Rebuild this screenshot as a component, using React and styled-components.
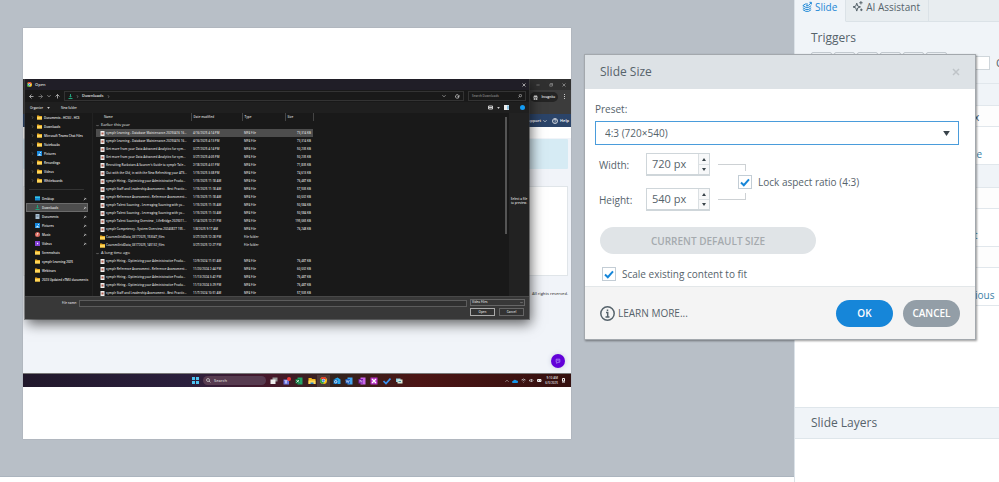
import React from "react";
import styled, { createGlobalStyle, css } from "styled-components";

const Global = createGlobalStyle`
  *, *::before, *::after { box-sizing: border-box; }
  body { margin: 0; background: #fff; font-family: "Open Sans", "Noto Sans", sans-serif; color: #56636b; }
  button, input, select { font: inherit; color: inherit; margin: 0; padding: 0; border: 0; background: none; }
  svg { display: block; flex: none; }
`;

const Page = styled.div`
  position: relative;
  display: flex;
  min-height: 100vh;
  overflow: hidden;
`;
const Workspace = styled.main`
  flex: 1;
  min-width: 0;
  margin-bottom: 5px;
  padding: 28px 223px 36px 23px;
  background: #b8bfc7;
  border-bottom: 1px solid #abb4be;
`;
const Slide = styled.section`
  padding: 51px 0 52px;
  background: #fff;
  box-shadow: 0 0 1px #8d959d;
`;

/* ---------- captured desktop on the slide ---------- */
const Desktop = styled.div`
  position: relative;
  display: flex;
  flex-direction: column;
  height: 308px;
  background: #f1f4f9;
  color: #ddd;
  font-size: 3px;
  font-weight: 600;
  line-height: 8px;
  overflow: hidden;
`;
const Line = styled.div`
  display: flex;
  align-items: center;
  flex: none;
  height: ${(p) => p.$h}px;
  gap: ${(p) => p.$gap || 0}px;
  padding: ${(p) => p.$pad || "0"};
  background: ${(p) => p.$bg || "transparent"};
  justify-content: ${(p) => p.$justify || "flex-start"};
`;
const Incognito = styled.span`
  display: flex;
  align-items: center;
  gap: 3px;
  height: 10px;
  padding: 0 3px;
  border-radius: 5px;
  background: #242424;
  color: #eee;
  font-size: 3px;
`;
const NavText = styled.a`
  display: flex;
  align-items: center;
  gap: 2px;
  color: #fff;
  font-size: 4px;
  font-weight: 600;
  text-decoration: none;
`;
const Banner = styled.div`
  height: 30px;
  margin: 11px 3px 17px 0;
  border-radius: 1px;
  background: #d6ebf4;
`;
const SiteTop = styled.div`
  padding-top: 1px;
  margin-top: -1px;
  background: linear-gradient(#fff 11px, #f1f4f9 11px);
`;
const SiteCard = styled.div`
  height: 90px;
  margin-right: 3px;
  background: #fff;
  border: 1px solid #e0e5e9;
`;
const Rights = styled.div`
  flex: 1;
  padding: 14px 3px 0;
  text-align: right;
  font-size: 4px;
  color: #555;
`;
const ChatBubble = styled.button`
  position: absolute;
  right: 6px;
  bottom: 19px;
  display: grid;
  place-items: center;
  width: 14px;
  height: 14px;
  border-radius: 50%;
  background: #6200d9;
  box-shadow: 0 0 5px #c9cdde;
`;
const Taskbar = styled.div`
  position: relative;
  display: flex;
  align-items: center;
  height: 14px;
  padding: 0 5px 0 169px;
  border-top: 1px solid #777;
  background: linear-gradient(90deg, #21182b, #2b1f3d 30%, #46182a 45%, #33231d 57%, #4c1515 72%, #34100f);
`;
const TaskSearch = styled.div`
  display: flex;
  align-items: center;
  gap: 3px;
  width: 63px;
  height: 9px;
  margin: 0 1px 0 4px;
  padding-left: 3px;
  border-radius: 5px;
  background: #573b50;
  color: #ccc;
  font-size: 4px;
`;
const TaskIcon = styled.span`
  display: grid;
  place-items: center;
  width: 13px;
  height: 12px;
  margin-right: ${(p) => (p.$tight ? -1 : 0)}px;
  background: ${(p) => (p.$active ? "#ffffff1c" : "none")};
`;
const Tray = styled.div`
  display: flex;
  align-items: center;
  gap: 3px;
  margin-left: auto;
  line-height: 5px;
  text-align: right;
`;

/* ---------- open-file dialog ---------- */
const FileDialog = styled.section`
  position: absolute;
  inset: 0 42px 68px 2px;
  display: flex;
  flex-direction: column;
  background: #191919;
  box-shadow: 2px 5px 12px #0009, 0 0 0 1px #55555588;
`;
const Field = styled.div`
  display: flex;
  align-items: center;
  gap: 3px;
  height: 10px;
  padding: 0 3px;
  border: 1px solid #333;
  flex: ${(p) => p.$flex || "none"};
  width: ${(p) => (p.$w ? p.$w + "px" : "auto")};
  color: ${(p) => (p.$dim ? "#888" : "#e2e2e2")};
  font-size: ${(p) => (p.$dim ? 3 : 4)}px;
`;
const FieldGap = styled.span`
  width: 3px;
`;
const Spacer = styled.span`
  flex: 1;
`;
const Bright = styled.span`
  color: #ddd;
  font-size: ${(p) => p.$size || 3}px;
`;
const Panes = styled.div`
  display: flex;
  flex: 1;
  min-height: 0;
`;
const Tree = styled.nav`
  width: 68px;
  padding-right: 4px;
  border-right: 1px solid #222;
`;
const TreeRow = styled.div`
  display: flex;
  align-items: center;
  gap: 2px;
  height: 9px;
  margin-left: 1px;
  padding: 0 1px 0 ${(p) => (p.$low ? 9 : 5)}px;
  white-space: nowrap;
  color: #e2e2e2;
  ${(p) => p.$active && css`background: #4d4d4d; outline: 1px solid #6b6b6b; outline-offset: -1px;`}
`;
const TreeArrow = styled.span`
  width: 4px;
`;
const TreeRule = styled.hr`
  height: 1px;
  margin: 4px;
  border: 0;
  background: #333;
`;
const Scroll = styled.div`
  width: 2px;
  height: ${(p) => p.$h}px;
  margin: ${(p) => p.$m};
  background: #555;
`;
const Files = styled.div`
  flex: 1;
  min-width: 0;
  padding-left: 3px;
`;
const FileTable = styled.table`
  width: 217px;
  table-layout: fixed;
  border-collapse: collapse;
  text-align: left;
  color: #dadada;
`;
const Th = styled.th`
  width: ${(p) => p.$w}px;
  height: 8px;
  padding: 0 0 0 ${(p) => p.$pl || 2}px;
  border-right: 1px solid #444;
  font-weight: 600;
`;
const Td = styled.td`
  height: 8px;
  padding: 0 2px;
  white-space: nowrap;
  text-align: ${(p) => (p.$right ? "right" : "left")};
`;
const Tr = styled.tr`
  ${(p) => p.$active && css`background: #4d4d4d;`}
`;
const GroupCell = styled.th`
  height: 8px;
  padding: 0;
  font-size: 4px;
  font-weight: 400;
  color: #eee;
`;
const NameCell = styled.span`
  display: flex;
  align-items: center;
  gap: ${(p) => (p.$group ? 2 : 1)}px;
  padding-left: ${(p) => (p.$group ? 0 : 2)}px;
`;
const Preview = styled.aside`
  width: 20px;
  padding: 84px 0 0;
  background: #222;
  text-align: center;
  line-height: 4px;
`;
const DialogFoot = styled.div`
  display: grid;
  grid-template-columns: 1fr 55px;
  gap: 1px 3px;
  height: 23px;
  padding: 2px 4px 3px 37px;
  background: #383838;
  border-top: 1px solid #484848;
`;
const FileName = styled.label`
  display: flex;
  align-items: center;
  gap: 2px;
`;
const NameInput = styled.input`
  flex: 1;
  height: 7px;
  border: 1px solid #5c5c5c;
  background: #303030;
`;
const TypeSelect = styled.button`
  display: flex;
  align-items: center;
  justify-content: space-between;
  height: 7px;
  padding: 0 1px;
  border: 1px solid #666;
  font-size: 3px;
  line-height: 5px;
`;
const FootButtons = styled.div`
  display: flex;
  grid-column: 2;
  gap: 4px;
`;
const FootButton = styled.button`
  width: 25px;
  height: 8px;
  border: 1px solid ${(p) => (p.$primary ? "#aaa" : "#666")};
  background: #333;
  font-size: 3px;
  line-height: 5px;
`;

/* ---------- right-hand panel ---------- */
const Panel = styled.aside`
  display: flex;
  flex-direction: column;
  width: 205px;
  overflow: hidden;
  border-left: 1px solid #dbe2e8;
  background: #fff;
`;
const Tabs = styled.div`
  display: flex;
  height: 22px;
  background: #e8edf0;
`;
const Tab = styled.button`
  display: flex;
  align-items: flex-start;
  gap: 3px;
  padding: 0 8px 0 7px;
  font-size: ${(p) => (p.$active ? 10 : 10)}px;
  line-height: 15px;
  border-right: 1px solid #dbe2e7;
  border-bottom: 1px solid ${(p) => (p.$active ? "#f0f4f8" : "#dbe2e7")};
  background: ${(p) => (p.$active ? "#f0f4f8" : "#e8edf0")};
  color: ${(p) => (p.$active ? "#1c87d6" : "#56636b")};
  svg { margin-top: 1px; }
`;
const TabFill = styled.div`
  flex: 1;
  border-bottom: 1px solid #dbe2e7;
`;
const TriggerHead = styled.div`
  height: 61px;
  padding: 7px 0 0 16px;
  background: #f0f4f8;
`;
const Heading = styled.h2`
  margin: 0;
  font-size: 12px;
  font-weight: 400;
  line-height: 18px;
`;
const ToolRow = styled.div`
  display: flex;
  align-items: flex-start;
  gap: 2px;
  padding-top: 5px;
  font-size: 11px;
  line-height: 22px;
  > * { flex: none; }
`;
const ToolButton = styled.button`
  width: 21px;
  height: 18px;
  border: 1px solid #c2c9cf;
  border-radius: 2px;
`;
const SmallBox = styled.span`
  width: 22px;
  height: 14px;
  margin: 4px 4px 0 19px;
  border: 1px solid #cfd6db;
  background: #fff;
`;
const ListRow = styled.div`
  height: ${(p) => p.$h}px;
  padding: ${(p) => p.$pad || "0"};
  border-top: 1px solid #e1e7ec;
  background: ${(p) => p.$bg || "#fff"};
  color: ${(p) => p.$color || "#3d82a8"};
  font-size: 10px;
  line-height: 14px;
`;
const Layers = styled.div`
  height: 32px;
  margin-top: auto;
  margin-bottom: 43px;
  padding: 6px 16px;
  border: solid #dfe6eb;
  border-width: 1px 0;
  background: #f0f4f8;
`;

/* ---------- slide size dialog ---------- */
const Dialog = styled.form`
  position: absolute;
  top: 54px;
  right: 23px;
  display: flex;
  flex-direction: column;
  width: 392px;
  border: 1px solid #a3a8ad;
  background: #fff;
  box-shadow: 1px 1px 2px #0006;
  font-size: 10px;
  line-height: 16px;
`;
const DialogHead = styled.header`
  display: flex;
  align-items: center;
  justify-content: space-between;
  height: 34px;
  padding: 0 15px;
  background: #dde2e6;
`;
const CloseButton = styled.button`
  width: 8px;
  height: 8px;
  color: #bfc4c8;
`;
const DialogBody = styled.div`
  display: flex;
  flex-direction: column;
  padding: 12px 16px 4px 10px;
`;
const Stack = styled.div`
  display: grid;
  align-items: center;
  > * { grid-area: 1 / 1; }
  > svg { pointer-events: none; justify-self: ${(p) => (p.$end ? "end" : "center")}; margin-right: ${(p) => p.$end || 0}px; }
`;
const Preset = styled.select`
  appearance: none;
  width: 100%;
  height: 24px;
  padding: 0 9px;
  border: 1px solid #4a9cdb;
  background: #fff;
`;
const PresetLabel = styled.label`
  height: 20px;
`;
const Dimensions = styled.div`
  display: flex;
  align-items: center;
  margin: 8px 0 16px 4px;
`;
const DimensionGrid = styled.div`
  display: grid;
  grid-template-columns: 37px 64px;
  gap: 12px 10px;
  align-items: center;
`;
const DimLabel = styled.label`
  color: #56636b;
`;
const Spin = styled.div`
  display: grid;
  grid-template: 1fr 1fr / 1fr 11px;
  height: 23px;
  border: 1px solid #cfd6da;
  border-bottom: 2px solid #cfd6da;
`;
const SpinInput = styled.input`
  grid-row: 1 / 3;
  width: 100%;
  min-width: 0;
  padding-left: 5px;
  font-size: 11px;
`;
const SpinButton = styled.button`
  display: grid;
  place-items: center;
  border-left: 1px solid #dbe0e3;
  background: #f7f8f9;
  & + & { border-top: 1px solid #dbe0e3; }
`;
const Bracket = styled.div`
  display: grid;
  grid-template-rows: 7px 14px 7px;
  gap: 4px;
  margin-left: 8px;
  width: 28px;
`;
const Arm = styled.span`
  border-right: 1px solid #cdd1d4;
  ${(p) => (p.$top ? css`border-top: 1px solid #cdd1d4;` : css`border-bottom: 1px solid #cdd1d4;`)}
`;
const CheckLabel = styled.label`
  display: flex;
  align-items: center;
  gap: 6px;
  margin-left: ${(p) => p.$shift || 0}px;
`;
const Check = styled.input`
  appearance: none;
  width: 14px;
  height: 14px;
  border: 1px solid #c3cdd5;
  background: #fff;
`;
const DefaultSize = styled.button`
  width: 216px;
  height: 27px;
  margin: 0 0 12px 5px;
  border-radius: 14px;
  background: #e0e4e7;
  color: #a5aaae;
  font-size: 10px;
  font-weight: 600;
`;
const DialogFooter = styled.footer`
  display: flex;
  align-items: center;
  gap: 10px;
  height: 53px;
  padding: 0 15px;
  border-top: 1px solid #e3e7e9;
  background: #f4f4f4;
`;
const Learn = styled.a`
  display: flex;
  align-items: center;
  gap: 3px;
  margin-right: auto;
  color: #56636b;
  text-decoration: none;
`;
const Pill = styled.button`
  width: 57px;
  height: 27px;
  border-radius: 14px;
  background: ${(p) => (p.$primary ? "#1686d9" : "#939ea7")};
  color: #fff;
  font-size: 10px;
  font-weight: 600;
`;

/* ---------- icons ---------- */
const Triangle = ({ up, w = 7, h = 5, fill = "#39434a" }) => (
  <svg width={w} height={h} viewBox="0 0 8 6" fill={fill}>
    <path d={up ? "M0 6 4 0 8 6Z" : "M0 0h8L4 6Z"} />
  </svg>
);
const Tick = () => (
  <svg width="10" height="9" viewBox="0 0 10 9" fill="none" stroke="#1686d9" strokeWidth="2">
    <path d="M1 4.5 3.8 7.2 9 1.4" />
  </svg>
);
const Cross = ({ s = 8, c = "currentColor", w = 1.5 }) => (
  <svg width={s} height={s} viewBox="0 0 8 8" stroke={c} strokeWidth={w}>
    <path d="M1 1l6 6M7 1 1 7" />
  </svg>
);
const Glyph = ({ d, s = 5, c = "#ccc", w = 1.5 }) => (
  <svg width={s} height={s} viewBox="0 0 10 10" fill="none" stroke={c} strokeWidth={w}>
    <path d={d} />
  </svg>
);
const G = {
  left: "M9 5H1M5 1 1 5l4 4",
  right: "M1 5h8M5 1l4 4-4 4",
  up: "M5 9V1M1 5l4-4 4 4",
  down: "M1 3l4 4 4-4",
  chevron: "M3 1l4 4-4 4",
  caretUp: "M1 7l4-4 4 4",
  reload: "M8 2v3H5M8 5A3.5 3.5 0 1 1 7 2.5",
  search: "M6 1a3 3 0 1 1 0 6a3 3 0 1 1 0-6M4 6 1 9",
  searchLeft: "M4 1a3 3 0 1 1 0 6a3 3 0 1 1 0-6M6 6l3 3",
  minus: "M1 5h8",
  box: "M2 3h6v5H2ZM4 3V1h5v5H8",
};
const kinds = {
  folder: (<><path d="M0 1h4l1 1h5v7H0Z" fill="#e7a922" /><path d="M0 4h10v5H0Z" fill="#ffd65a" /></>),
  desktop: (<><path d="M0 1h10v8H0Z" fill="#168bd1" /><path d="M0 1h10v3H0Z" fill="#35c3e8" /></>),
  down: (<path d="M4 0h2v4h2L5 7 2 4h2ZM1 8h8v2H1Z" fill="#21a37b" />),
  doc: (<><path d="M1 0h8v10H1Z" fill="#a9bfd1" /><path d="M3 3h4v1H3ZM3 5h4v1H3Z" fill="#54708a" /></>),
  picture: (<><path d="M0 0h10v10H0Z" fill="#1689df" /><path d="m1 9 4-4 4 4Z" fill="#c9ecff" /><circle cx="7" cy="3" r="1" fill="#fff" /></>),
  music: (<><circle cx="5" cy="5" r="5" fill="#d9675c" /><path d="M4 2h3v1H5v4H3V5h1Z" fill="#fff" /></>),
  video: (<><path d="M0 0h10v10H0Z" fill="#8542d8" /><path d="m4 3 3 2-3 2Z" fill="#fff" /></>),
  mp4: (<><path d="M1 0h8v10H1Z" fill="#eee" /><path d="M3 3h4v4H3Z" fill="#b55b48" /></>),
};
const FileIcon = ({ kind, s = 5 }) => (
  <svg width={s} height={s} viewBox="0 0 10 10">{kinds[kind]}</svg>
);
const ChromeIcon = ({ s }) => (
  <svg width={s} height={s} viewBox="0 0 16 16">
    <circle cx="8" cy="8" r="8" fill="#fbc116" />
    <path d="M8 8 1 4a8 8 0 0 1 14 0Z" fill="#e33b2e" />
    <path d="M8 8 1 4a8 8 0 0 0 6 12l4-7Z" fill="#28a34a" />
    <circle cx="8" cy="8" r="3.8" fill="#fff" />
    <circle cx="8" cy="8" r="2.8" fill="#3d80ed" />
  </svg>
);
const taskArt = [
  <><path d="M5 1h10v8H5Z" fill="#999" /><path d="M1 5h10v9H1Z" fill="#eee" /></>,
  <><path d="M1 5h11v10H1Z" fill="#6a70dc" /><path d="M3 7h6v1H7v5H5V8H3Z" fill="#fff" /><circle cx="12" cy="4" r="4" fill="#e93b3b" /></>,
  <><path d="M5 1h10v14H5Z" fill="#21a366" /><path d="M1 4h9v9H1Z" fill="#107c41" /><path d="m3 6 5 5M8 6l-5 5" stroke="#fff" strokeWidth="1.5" /></>,
  <><path d="M1 2h6l1 2h7v10H1Z" fill="#f2b51c" /><path d="M1 7h14v7H1Z" fill="#ffd95d" /><path d="M5 11h6v3H5Z" fill="#2787d1" /></>,
  null,
  <><path d="M3 4 9 1l6 4v9H3Z" fill="#28a8ea" /><path d="M1 5h9v9H1Z" fill="#0f6cbd" /><circle cx="5.5" cy="9.5" r="2.5" fill="none" stroke="#fff" strokeWidth="1.5" /></>,
  <><path d="M5 1h10v14H5Z" fill="#41a5ee" /><path d="M1 4h9v9H1Z" fill="#185abd" /><path d="m2 6 2 5 1.5-4L7 11l2-5" fill="none" stroke="#fff" /></>,
  <><path d="M5 1h10v14H5Z" fill="#ca64ea" /><path d="M1 4h9v9H1Z" fill="#7719aa" /><path d="M4 11V6l4 5V6" fill="none" stroke="#fff" /></>,
  <><path d="M1 1h14v14H1Z" fill="#b832c5" /><path d="m4 4 8 8M12 4l-8 8" stroke="#fff" strokeWidth="2.5" /></>,
  <path d="m1 8 5 5 9-10" fill="none" stroke="#3b92ef" strokeWidth="3.5" />,
  <><path d="M2 3h9v7H2Z" fill="#8bc7df" /><path d="M5 5h10v8H5Z" fill="#d7e8d8" /><path d="M7 8h5v2H7Z" fill="#478ba5" /></>,
];

/* ---------- data ---------- */
const upperTree = [
  ["Documents - HCSU - HCS", "folder"], ["Downloads", "folder"], ["Microsoft Teams Chat Files", "folder"],
  ["Notebooks", "folder"], ["Pictures", "picture"], ["Recordings", "folder"], ["Videos", "folder"], ["Whiteboards", "folder"],
];
const lowerTree = [
  ["Desktop", "desktop", 1], ["Downloads", "down", 1], ["Documents", "doc", 1], ["Pictures", "picture", 1],
  ["Music", "music", 1], ["Videos", "video", 1], ["Screenshots", "folder"], ["symplr Learning 2025", "folder"],
  ["Webinars", "folder"], ["2023 Updated cTMU documents", "folder"],
];
const recent = [
  ["symplr Learning - Database Maintenance-20250416 16...", "4/16/2025 4:14 PM", "MP4 File", "73,314 KB"],
  ["symplr Learning - Database Maintenance-20250416 16...", "4/16/2025 4:13 PM", "MP4 File", "73,314 KB"],
  ["Get more from your Data Advanced Analytics for sym...", "3/27/2025 4:14 PM", "MP4 File", "50,235 KB"],
  ["Get more from your Data Advanced Analytics for sym...", "3/27/2025 4:05 PM", "MP4 File", "50,235 KB"],
  ["Recruiting Rockstars A Sourcer's Guide to symplr Tale...", "2/18/2025 4:31 PM", "MP4 File", "71,835 KB"],
  ["Out with the Old, in with the New Refreshing your ATS...", "1/15/2025 3:38 PM", "MP4 File", "74,613 KB"],
  ["symplr Hiring - Optimizing your Administrative Produ...", "1/15/2025 11:18 AM", "MP4 File", "76,487 KB"],
  ["symplr Staff and Leadership Assessment - Best Practic...", "1/15/2025 11:18 AM", "MP4 File", "57,505 KB"],
  ["symplr Reference Assessment - Reference Assessment...", "1/15/2025 11:18 AM", "MP4 File", "60,032 KB"],
  ["symplr Talent Sourcing - Leveraging Sourcing with yo...", "1/15/2025 11:15 AM", "MP4 File", "50,584 KB"],
  ["symplr Talent Sourcing - Leveraging Sourcing with yo...", "1/15/2025 11:13 AM", "MP4 File", "50,584 KB"],
  ["symplr Talent Sourcing Overview _ LifeBridge-2025011...", "1/14/2025 12:21 PM", "MP4 File", "195,065 KB"],
  ["symplr Competency - System Overview-20240827 155...", "1/8/2025 9:17 AM", "MP4 File", "76,248 KB"],
  ["CoursesGridData_03172025_153047_files", "3/27/2025 12:28 PM", "File folder", ""],
  ["CoursesGridData_03172025_145132_files", "3/27/2025 12:27 PM", "File folder", ""],
];
const older = [
  ["symplr Hiring - Optimizing your Administrative Produ...", "12/9/2024 11:51 AM", "MP4 File", "76,487 KB"],
  ["symplr Reference Assessment - Reference Assessment...", "11/20/2024 2:44 PM", "MP4 File", "60,032 KB"],
  ["symplr Hiring - Optimizing your Administrative Produ...", "11/13/2024 3:42 PM", "MP4 File", "76,487 KB"],
  ["symplr Hiring - Optimizing your Administrative Produ...", "11/13/2024 3:29 PM", "MP4 File", "76,487 KB"],
  ["symplr Staff and Leadership Assessment - Best Practic...", "11/7/2024 10:51 AM", "MP4 File", "57,505 KB"],
];

const FileRows = ({ files, selected }) =>
  files.map(([name, date, type, size], i) => (
    <Tr key={i} $active={i === selected}>
      <Td><NameCell><FileIcon kind={type === "MP4 File" ? "mp4" : "folder"} />{name}</NameCell></Td>
      <Td>{date}</Td>
      <Td>{type}</Td>
      <Td $right>{size}</Td>
    </Tr>
  ));
const Group = ({ title }) => (
  <tr>
    <GroupCell colSpan={4}><NameCell $group><Glyph d={G.down} s={3} />{title}</NameCell></GroupCell>
  </tr>
);

const OpenDialog = () => (
  <FileDialog>
    <Line $h={11} $bg="#201e27" $gap={3} $pad="0 3px 0 2px">
      <ChromeIcon s={5} /><Bright $size={4}>Open</Bright><Spacer /><Cross s={4} c="#ccc" />
    </Line>
    <Line $h={12} $gap={4} $pad="0 3px 0 4px">
      <Glyph d={G.left} /><Glyph d={G.right} c="#888" /><Glyph d={G.down} s={4} /><Glyph d={G.up} />
      <Field $flex="1">
        <FileIcon kind="down" /><Glyph d={G.chevron} s={3} />Downloads<Glyph d={G.chevron} s={3} />
        <Spacer /><Glyph d={G.down} s={4} /><FieldGap /><Glyph d={G.reload} s={5} />
      </Field>
      <Field $w={58} $dim>Search Downloads<Spacer /><Glyph d={G.search} s={4} /></Field>
    </Line>
    <Line $h={11} $bg="#1f1f1f" $gap={4} $pad="0 4px 0 5px">
      <Bright>Organize</Bright><Triangle w={3} h={2} fill="#ccc" /><FieldGap /><Bright>New folder</Bright><Spacer />
      <Glyph d="M1 2h8v6H1ZM1 5h8" w={2} /><Triangle w={3} h={2} fill="#ccc" />
      <svg width="5" height="5" viewBox="0 0 10 10"><path d="M0 0h10v10H0Z" fill="#eee" /><path d="M7 1h2v8H7Z" fill="#2495d5" /></svg>
      <FieldGap />
      <svg width="5" height="5" viewBox="0 0 10 10"><circle cx="5" cy="5" r="5" fill="#149bf2" /></svg>
    </Line>
    <Panes>
      <Tree>
        {upperTree.map(([name, kind]) => (
          <TreeRow key={name}><TreeArrow><Glyph d={G.chevron} s={3} c="#999" /></TreeArrow><FileIcon kind={kind} />{name}</TreeRow>
        ))}
        <TreeRule />
        {lowerTree.map(([name, kind, pin]) => (
          <TreeRow key={name} $low $active={kind === "down"}>
            <FileIcon kind={kind} />{name}<Spacer />{pin && <Glyph d="M2 8l3-3M4 3l3 3M5 2l3 3" s={4} w={2} />}
          </TreeRow>
        ))}
      </Tree>
      <Files>
        <FileTable>
          <thead>
            <tr><Th $w={95} $pl={8}>Name</Th><Th $w={51}>Date modified</Th><Th $w={43}>Type</Th><Th $w={28}>Size</Th></tr>
          </thead>
          <tbody>
            <Group title="Earlier this year" />
            <FileRows files={recent} selected={0} />
            <Group title="A long time ago" />
            <FileRows files={older} />
          </tbody>
        </FileTable>
      </Files>
      <Scroll $h={117} $m="4px 2px 0 0" />
      <Preview>Select a file to preview.</Preview>
    </Panes>
    <DialogFoot>
      <FileName>File name:<NameInput /></FileName>
      <TypeSelect type="button">Video Files<Glyph d={G.down} s={3} /></TypeSelect>
      <FootButtons>
        <FootButton type="button" $primary>Open</FootButton>
        <FootButton type="button">Cancel</FootButton>
      </FootButtons>
    </DialogFoot>
  </FileDialog>
);

const DesktopCapture = () => (
  <Desktop>
    <Line $h={11} $bg="#303030" $gap={9} $pad="0 5px" $justify="flex-end">
      <Glyph d={G.minus} s={4} c="#999" /><Glyph d={G.box} s={4} c="#999" /><Cross s={4} c="#999" />
    </Line>
    <Line $h={14} $bg="#3c3c3c" $gap={5} $pad="0 4px" $justify="flex-end">
      <Incognito>
        <svg width="5" height="5" viewBox="0 0 10 10" fill="#ddd"><path d="M2 1h6l1 3H1ZM0 5h10v1H0Z" /><circle cx="3" cy="8" r="2" /><circle cx="7" cy="8" r="2" /></svg>
        Incognito
      </Incognito>
      <svg width="4" height="6" viewBox="0 0 4 6" fill="#ccc"><path d="M1 0h1v1H1ZM1 2h1v1H1ZM1 4h1v1H1Z" /></svg>
    </Line>
    <Line $h={10} $bg="#3c3c3c" />
    <Line $h={14} $bg="#2b4469" $gap={5} $pad="0 2px" $justify="flex-end">
      <NavText href="#support">Support<Glyph d={G.down} s={4} c="#fff" /></NavText>
      <NavText href="#help">
        <svg width="6" height="6" viewBox="0 0 12 12" fill="none" stroke="#fff" strokeWidth="1.5"><circle cx="6" cy="6" r="5" /><path d="M4 5c0-3 4-3 4-.5C8 6 6 6 6 7.5M6 8.5v1" /></svg>
        Help
      </NavText>
    </Line>
    <SiteTop><Banner /></SiteTop>
    <SiteCard />
    <Rights>All rights reserved.</Rights>
    <ChatBubble type="button" aria-label="Chat"><Glyph d="M2 2h6v5H5L3 9V7H2ZM4 4h2" s={6} c="#a984ef" /></ChatBubble>
    <Taskbar>
      <svg width="7" height="7" viewBox="0 0 7 7" fill="#4cc2f1"><path d="M0 0h3v3H0ZM4 0h3v3H4ZM0 4h3v3H0ZM4 4h3v3H4Z" /></svg>
      <TaskSearch><Glyph d={G.searchLeft} s={5} />Search</TaskSearch>
      {taskArt.map((art, i) => (
        <TaskIcon key={i} $active={i === 4} $tight={i % 2 === 1}>
          {art ? <svg width="8" height="8" viewBox="0 0 16 16">{art}</svg> : <ChromeIcon s={7} />}
        </TaskIcon>
      ))}
      <Tray>
        <Glyph d={G.caretUp} s={4} />
        <svg width="6" height="4" viewBox="0 0 12 8"><path d="M2 8a2 2 0 0 1 0-4 4 4 0 0 1 7-1 2.5 2.5 0 0 1 1 5Z" fill="#1594e8" /></svg>
        <Glyph d="M1 4q4-4 8 0M3 6q2-2 4 0M5 8v1" s={5} />
        <Glyph d="M1 4h2l2-2v6L3 6H1ZM7 3q2 2 0 4" s={5} />
        <Glyph d="M1 3h7v4H1ZM3 5h4" s={5} w={2} c="#eee" />
        <span>9:10 AM<br />6/5/2025</span>
        <Glyph d="M3 1v5h4V1ZM2 8h6" s={5} w={2} c="#eee" />
      </Tray>
    </Taskbar>
    <OpenDialog />
  </Desktop>
);

const Dimension = ({ id, label, value }) => (
  <>
    <DimLabel htmlFor={id}>{label}</DimLabel>
    <Spin>
      <SpinInput id={id} defaultValue={value} />
      <SpinButton type="button" aria-label={`Increase ${id}`}><Triangle up w={4} h={3} /></SpinButton>
      <SpinButton type="button" aria-label={`Decrease ${id}`}><Triangle w={4} h={3} /></SpinButton>
    </Spin>
  </>
);

export default function App() {
  return (
    <Page>
      <Global />
      <Workspace>
        <Slide><DesktopCapture /></Slide>
      </Workspace>
      <Panel>
        <Tabs>
          <Tab type="button" $active>
            <svg width="10" height="11" viewBox="0 0 12 13" fill="none" stroke="currentColor" strokeWidth="1.2">
              <path d="M7 3.500H4L1 5.500 4.500 7.500H8L11 5.500M1 8l3.500 2H8l3-2M1 10.300l3.500 2H8l3-2M5 5.500h2.500L11 2M9 1.500h2.200V4" />
            </svg>
            Slide
          </Tab>
          <Tab type="button">
            <svg width="10" height="11" viewBox="0 0 12 13" fill="none" stroke="currentColor" strokeWidth="1.2">
              <path d="M4.500 2.500 5.700 6l3.300 1-3.300 1.200L4.500 12 3.300 8.200 0 7l3.300-1ZM9.500 0v4M7.500 2h4M10 9v3M8.500 10.500h3" />
            </svg>
            AI Assistant
          </Tab>
          <TabFill />
        </Tabs>
        <TriggerHead>
          <Heading>Triggers</Heading>
          <ToolRow>
            {[0, 1, 2, 3, 4, 5].map((i) => <ToolButton key={i} type="button" aria-label="Trigger action" />)}
            <SmallBox />O
          </ToolRow>
        </TriggerHead>
        <ListRow $h={22} $bg="#f0f4f8" />
        <ListRow $h={21} $bg="#fdfdfd" $pad="4px 0 0 179px" $color="#35536a">x</ListRow>
        <ListRow $h={38} $pad="20px 0 0 179px">le</ListRow>
        <ListRow $h={23} $bg="#f0f4f8" />
        <ListRow $h={21} $bg="#fdfdfd" />
        <ListRow $h={38} $pad="19px 0 0 179px">t</ListRow>
        <ListRow $h={21} $bg="#fdfdfd" />
        <ListRow $h={38} $pad="20px 0 0 175px">vious</ListRow>
        <ListRow $h={20} />
        <Layers><Heading>Slide Layers</Heading></Layers>
      </Panel>

      <Dialog role="dialog" aria-label="Slide Size" onSubmit={(e) => e.preventDefault()}>
        <DialogHead>
          <Heading as="h1">Slide Size</Heading>
          <CloseButton type="button" aria-label="Close"><Cross /></CloseButton>
        </DialogHead>
        <DialogBody>
          <PresetLabel htmlFor="preset">Preset:</PresetLabel>
          <Stack $end={9}>
            <Preset id="preset"><option>4:3 (720×540)</option></Preset>
            <Triangle />
          </Stack>
          <Dimensions>
            <DimensionGrid>
              <Dimension id="width" label="Width:" value="720 px" />
              <Dimension id="height" label="Height:" value="540 px" />
            </DimensionGrid>
            <Bracket><Arm $top /><span /><Arm /></Bracket>
            <CheckLabel $shift={-8}>
              <Stack><Check type="checkbox" defaultChecked /><Tick /></Stack>
              Lock aspect ratio (4:3)
            </CheckLabel>
          </Dimensions>
          <DefaultSize type="button" disabled>CURRENT DEFAULT SIZE</DefaultSize>
          <CheckLabel $shift={7}>
            <Stack><Check type="checkbox" defaultChecked /><Tick /></Stack>
            Scale existing content to fit
          </CheckLabel>
        </DialogBody>
        <DialogFooter>
          <Learn href="#learn">
            <svg width="15" height="15" viewBox="0 0 15 15" fill="none" stroke="#56636b" strokeWidth="1.5">
              <circle cx="7.5" cy="7.5" r="6.7" /><path d="M6 6.500h1.700V11M5.500 11h4M7.500 3.500v1.500" />
            </svg>
            LEARN MORE...
          </Learn>
          <Pill $primary>OK</Pill>
          <Pill type="button">CANCEL</Pill>
        </DialogFooter>
      </Dialog>
    </Page>
  );
}
